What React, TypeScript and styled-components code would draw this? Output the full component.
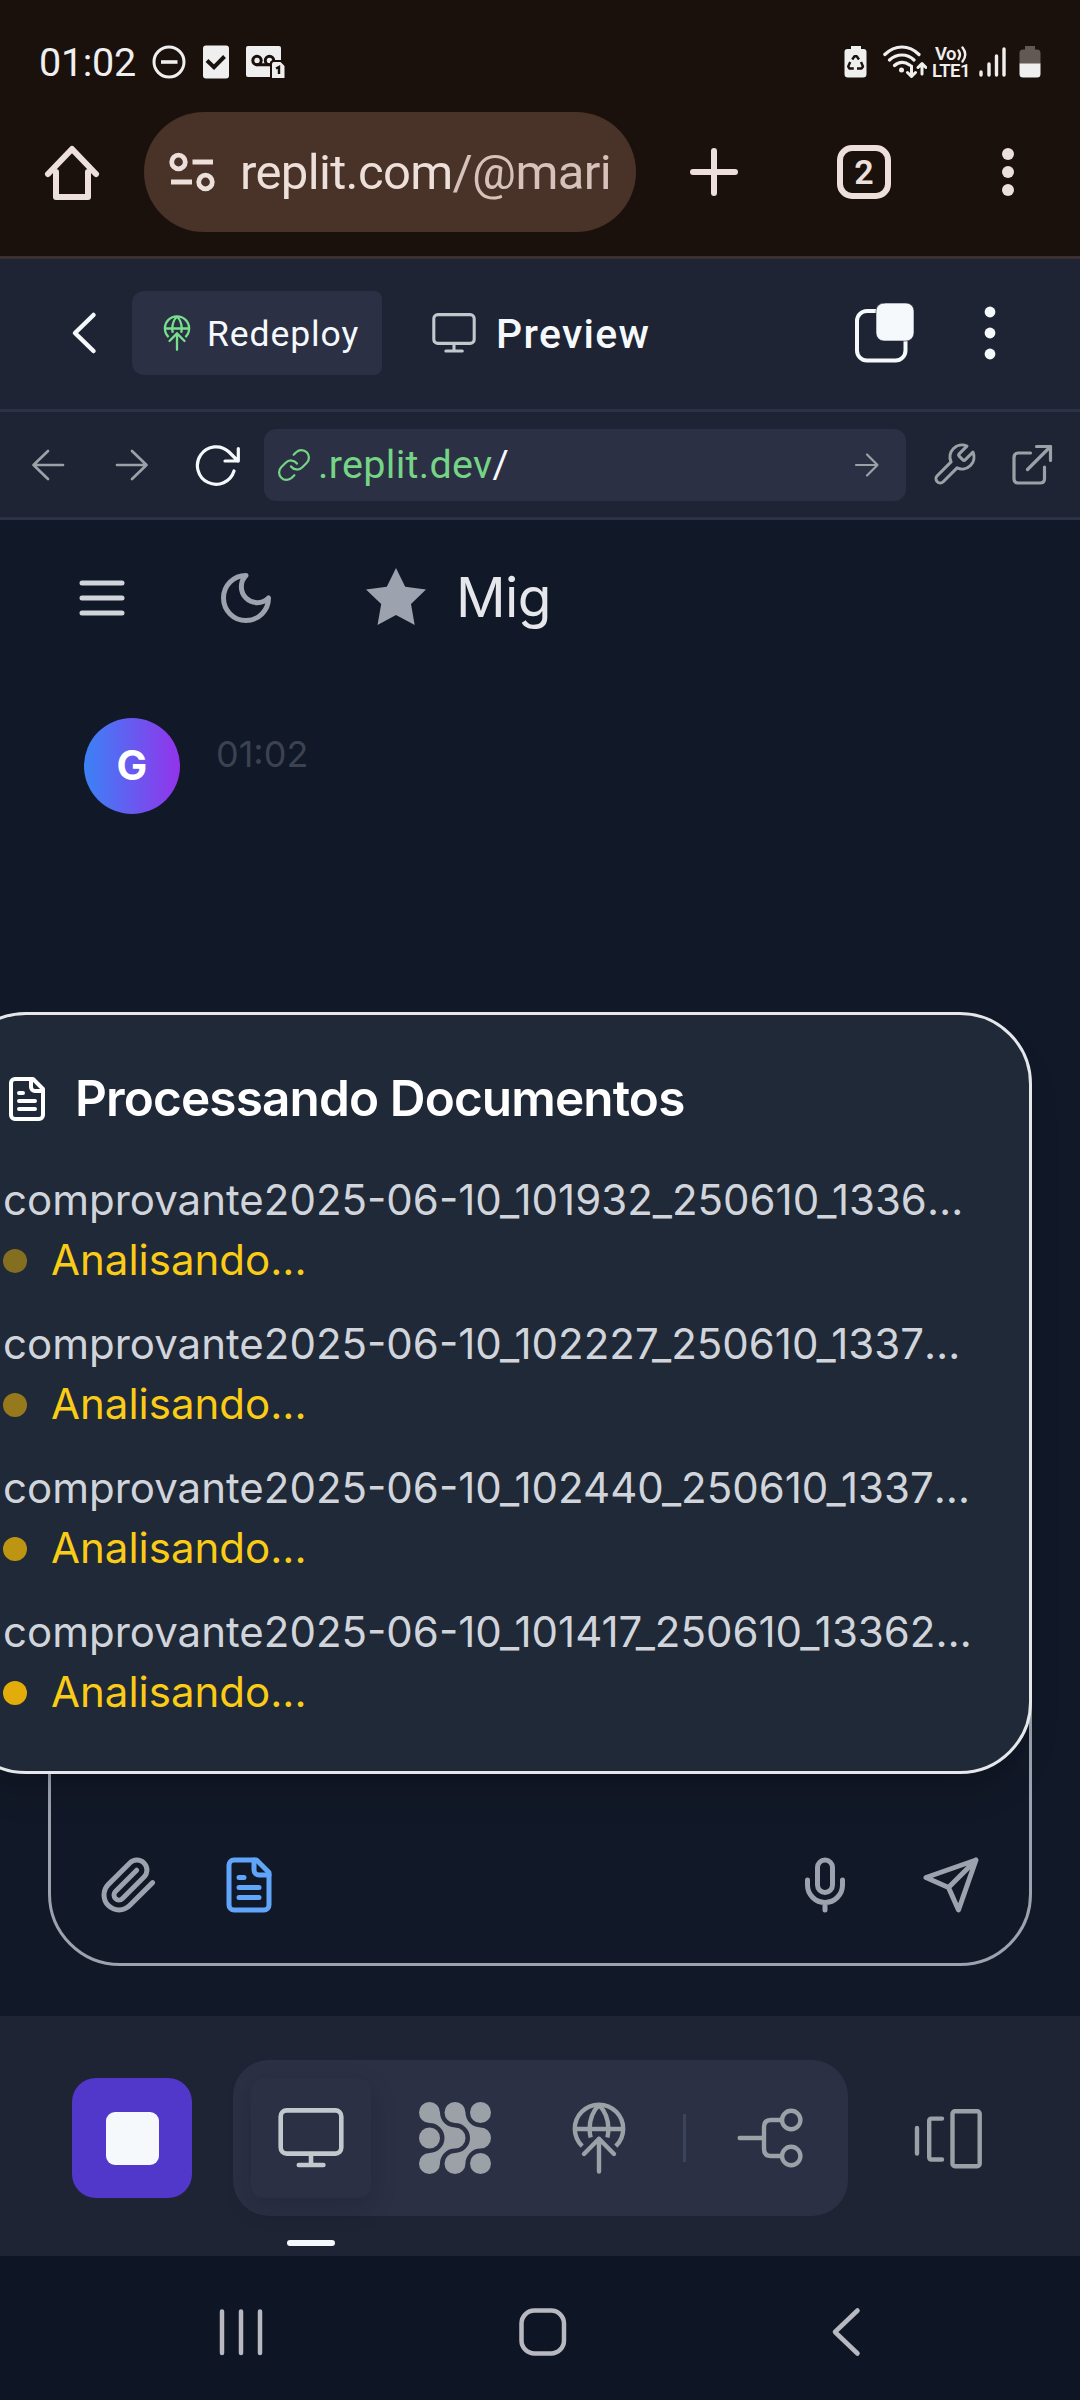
import React from "react";
import styled, { createGlobalStyle } from "styled-components";

const Global = createGlobalStyle`
  *, *::before, *::after { box-sizing: border-box; }
  html, body { margin: 0; padding: 0; background: #111827; }
  svg { display: block; flex: none; }
`;

const ui = `Roboto, "Liberation Sans", sans-serif`;
const inter = `Inter, Roboto, sans-serif`;

const Screen = styled.div`
  width: 1080px;
  height: 2400px;
  overflow: hidden;
  display: flex;
  flex-direction: column;
  font-family: ${ui};
  background: #111827;
`;

/* Status bar */
const StatusBar = styled.header`
  height: 112px;
  padding: 12px 39px 0 39px;
  display: flex;
  align-items: center;
  justify-content: space-between;
  background: #1b110c;
  color: #efefef;
`;
const StatusGroup = styled.div<{ $gap: number }>`
  display: flex;
  align-items: center;
  gap: ${(p) => p.$gap}px;
`;
const Clock = styled.span`
  font-size: 39.5px;
  line-height: 46px;
  letter-spacing: -0.3px;
  margin-top: 1px;
`;
const Carrier = styled.span`
  display: flex;
  flex-direction: column;
  align-items: center;
  width: 38px;
  margin: 1px 2px 0 -2px;
  font-size: 18.5px;
  font-weight: 600;
  line-height: 17px;
  letter-spacing: -0.6px;
`;
const CarrierTop = styled.span`
  display: flex;
  align-items: center;
  gap: 1px;
`;

/* Browser bar */
const BrowserBar = styled.nav`
  height: 147px;
  display: flex;
  align-items: flex-start;
  background: #1b110c;
  border-bottom: 3px solid #3c2f2f;
`;
const Cell = styled.div<{ $w: number; $h?: number; $color?: string }>`
  width: ${(p) => p.$w}px;
  height: ${(p) => p.$h ?? 120}px;
  display: flex;
  align-items: center;
  justify-content: center;
  flex: none;
  ${(p) => p.$color && `color: ${p.$color};`}
`;
const AddressPill = styled.div`
  width: 492px;
  height: 120px;
  border-radius: 60px;
  background: #493227;
  display: flex;
  align-items: center;
  padding-left: 24px;
  gap: 24px;
  color: #eddfda;
`;
const Address = styled.span`
  margin-top: 2px;
  font-size: 49px;
  letter-spacing: -0.65px;
  line-height: 60px;
  white-space: nowrap;
`;
const AddressPath = styled.span`
  color: #d6c2ba;
`;
const TabCount = styled.div`
  width: 54px;
  height: 54px;
  border: 6px solid #eddfda;
  border-radius: 15px;
  display: flex;
  align-items: center;
  justify-content: center;
  color: #eddfda;
  font-size: 34px;
  font-weight: 600;
  line-height: 42px;
`;

/* Editor header */
const EditorHeader = styled.div`
  height: 153px;
  padding: 0 0 2px 60px;
  display: flex;
  align-items: center;
  background: #1e2433;
  border-bottom: 3px solid #2b3245;
  color: #f5f9fc;
`;
const Redeploy = styled.button`
  margin: 0 0 0 24px;
  width: 250px;
  height: 84px;
  border: 0;
  border-radius: 12px 8px 8px 12px;
  background: #2b3044;
  display: flex;
  align-items: center;
  padding: 2px 0 0 27px;
  gap: 12px;
  color: #f5f9fc;
  font-family: ${ui};
  font-size: 35.5px;
  letter-spacing: 0.9px;
`;
const DeployIcon = styled.span`
  margin-top: -2px;
  color: #78e08c;
`;
const PaneIcon = styled.span`
  margin-left: 48px;
  color: #c2c8cc;
`;
const PaneTitle = styled.h1`
  margin: 2px auto 0 18px;
  font-size: 41px;
  font-weight: 500;
  letter-spacing: 1.3px;
  line-height: 50px;
`;

/* Preview address bar */
const PreviewBar = styled.div`
  height: 108px;
  display: flex;
  align-items: center;
  background: #1e2433;
  border-bottom: 3px solid #2b3245;
  color: #9ba1a6;
`;
const UrlField = styled.div`
  width: 642px;
  height: 72px;
  border-radius: 12px;
  background: #2b3044;
  display: flex;
  align-items: center;
  padding: 0 24px 0 12px;
  color: #f5f9fc;
  font-size: 39.5px;
  line-height: 48px;
  letter-spacing: 0.3px;
`;
const Host = styled.span`
  margin-left: 6px;
  color: #75d485;
`;
const LinkIcon = styled.span`
  color: #75d485;
`;
const GoIcon = styled.span`
  margin-left: auto;
  color: #9ba1a6;
`;

/* Embedded app */
const AppView = styled.main`
  height: 1496px;
  display: flex;
  flex-direction: column;
  background: #111827;
  font-family: ${inter};
  color: #9ca3af;
`;
const AppHeader = styled.div`
  height: 156px;
  padding-left: 72px;
  display: flex;
  align-items: center;
`;
const MenuIcon = styled.span`
  color: #d1d5db;
  margin-right: 84px;
`;
const StarIcon = styled.span`
  margin: 0 30px 0 90px;
`;
const AppName = styled.span`
  margin-top: -3px;
  font-size: 55px;
  letter-spacing: -0.6px;
  line-height: 70px;
  color: #e5e7eb;
`;
const Message = styled.div`
  display: flex;
  margin: 42px 0 0 84px;
  gap: 36px;
`;
const Avatar = styled.div`
  width: 96px;
  height: 96px;
  border-radius: 50%;
  background: linear-gradient(to right, #3b82f6, #9333ea);
  display: flex;
  align-items: center;
  justify-content: center;
  padding-bottom: 2px;
  color: #fff;
  font-size: 41px;
  font-weight: 700;
`;
const MessageTime = styled.time`
  font-size: 36px;
  line-height: 48px;
  margin-top: 12px;
  color: #3b4250;
`;
const Composer = styled.section`
  position: relative;
  margin: auto 48px 50px;
  height: 400px;
  border: 3px solid #9ca3af;
  border-radius: 72px;
  display: flex;
  align-items: flex-end;
  padding: 0 48px 48px 48px;
`;
const ToolGap = styled.span<{ $w?: number }>`
  ${(p) => (p.$w ? `width: ${p.$w}px;` : "flex: 1;")}
`;
const DocIcon = styled.span`
  color: #60a5fa;
`;
const Popup = styled.aside`
  position: absolute;
  right: -3px;
  bottom: 189px;
  width: 1078px;
  height: 762px;
  padding: 49px 45px 0;
  border: 3px solid #e5e7eb;
  border-radius: 72px;
  background: #1f2937;
  box-shadow: 0 25px 38px -8px rgba(0, 0, 0, 0.12), 0 10px 15px -10px rgba(0, 0, 0, 0.12);
`;
const PopupTitle = styled.h2`
  margin: -1px 0 37px;
  height: 70px;
  display: flex;
  align-items: center;
  gap: 24px;
  color: #fff;
  font-size: 49.5px;
  font-weight: 600;
  letter-spacing: -0.88px;
  line-height: 70px;
  white-space: nowrap;
`;
const TitleIcon = styled.span`
  margin: 1px 0 0 1px;
`;
const FileList = styled.ul`
  margin: 0;
  padding: 0;
  list-style: none;
  display: flex;
  flex-direction: column;
  gap: 24px;
  font-size: 42px;
  line-height: 60px;
`;
const FileName = styled.div`
  display: flex;
  padding-left: 1px;
  color: #d1d5db;
  white-space: nowrap;
`;
const FileStatus = styled.div`
  display: flex;
  align-items: center;
  gap: 24px;
  color: #facc15;
`;
const Pulse = styled.i<{ $o: number }>`
  width: 24px;
  height: 24px;
  margin: 2px 0 0 1px;
  border-radius: 50%;
  background: #eab308;
  opacity: ${(p) => p.$o};
`;

/* Workspace dock */
const Dock = styled.footer`
  height: 240px;
  padding: 0 72px;
  display: flex;
  align-items: flex-start;
  justify-content: space-between;
  background: #1e2433;
  color: #9ba1a6;
`;
const StopButton = styled.div`
  width: 120px;
  height: 120px;
  margin-top: 62px;
  border-radius: 24px;
  background: #5138cb;
  display: flex;
  align-items: center;
  justify-content: center;
`;
const StopGlyph = styled.div`
  width: 53px;
  height: 53px;
  border-radius: 9px;
  background: #f5f9fc;
`;
const ToolGroup = styled.div`
  height: 156px;
  margin-top: 44px;
  padding: 0 18px;
  border-radius: 36px;
  background: #2b3044;
  display: flex;
  align-items: center;
  gap: 24px;
`;
const Tool = styled.div<{ $active?: boolean; $top?: number }>`
  position: relative;
  width: 120px;
  height: 120px;
  margin-top: ${(p) => p.$top ?? 0}px;
  border-radius: 12px;
  display: flex;
  align-items: center;
  justify-content: center;
  ${(p) => p.$active && `background: #2b3044; color: #c2c8cc; box-shadow: 0 9px 24px rgba(14, 20, 34, 0.22);`}
`;
const Indicator = styled.b`
  position: absolute;
  left: 36px;
  top: 162px;
  width: 48px;
  height: 6px;
  border-radius: 3px;
  background: #f5f9fc;
`;
const Divider = styled.i`
  width: 3px;
  height: 48px;
  background: #3c445c;
`;

/* System navigation */
const SystemNav = styled.div`
  height: 144px;
  padding: 8px 205px 0 211px;
  display: flex;
  align-items: center;
  justify-content: space-between;
  background: #0e1525;
  color: #b8b8c0;
`;

type IconProps = { w: number; h?: number; vw?: number; vh?: number; sw?: number; children: React.ReactNode };
const Icon = ({ w, h = w, vw = w, vh = h, sw = 4, children }: IconProps) => (
  <svg
    width={w}
    height={h}
    viewBox={`0 0 ${vw} ${vh}`}
    fill="none"
    stroke="currentColor"
    strokeWidth={sw}
    strokeLinecap="round"
    strokeLinejoin="round"
  >
    {children}
  </svg>
);

const Globe = ({ size, sw = 4.4 }: { size: number; sw?: number }) => (
  <Icon w={size} vw={72} vh={72} sw={sw}>
    <path strokeLinecap="butt" d="M19.2 44.2A24.2 24.2 0 1 1 52.8 44.2" />
    <path d="M12.5 27H59.5" />
    <path strokeLinecap="butt" d="M36 3C30 9 26.6 18 26.6 27C26.6 30 26.9 32.5 27.6 35.4M36 3C42 9 45.4 18 45.4 27C45.4 30 45.1 32.5 44.4 35.4" />
    <path d="M36 36.8V69.5M21 52L36 36.8L51 52" />
  </Icon>
);

const Monitor = ({ size, sw = 4.6 }: { size: number; sw?: number }) => (
  <Icon w={size} vw={72} vh={72} sw={sw}>
    <rect x="5.7" y="8.4" width="60.6" height="43.2" rx="6" />
    <path d="M36 52V63M23.8 63H48.4" />
  </Icon>
);

const FileText = ({ size }: { size: number }) => (
  <Icon w={size} vw={24} vh={24} sw={2}>
    <path d="M15 2H6a2 2 0 0 0-2 2v16a2 2 0 0 0 2 2h12a2 2 0 0 0 2-2V7Z" />
    <path d="M14 2v4a2 2 0 0 0 2 2h4M10 9H8M16 13H8M16 17H8" />
  </Icon>
);

const files = [
  { name: "comprovante2025-06-10_101932_250610_1336", o: 0.5 },
  { name: "comprovante2025-06-10_102227_250610_1337", o: 0.58 },
  { name: "comprovante2025-06-10_102440_250610_1337", o: 0.78 },
  { name: "comprovante2025-06-10_101417_250610_13362", o: 0.96 },
];

export default function App() {
  return (
    <Screen>
      <Global />
      <StatusBar>
        <StatusGroup $gap={16}>
          <Clock>01:02</Clock>
          <Icon w={34} sw={3}>
            <circle cx="17" cy="17" r="15" />
            <path strokeWidth="3.6" strokeLinecap="butt" d="M9 17H25.5" />
          </Icon>
          <Icon w={28} h={34} sw={4}>
            <rect x="1" y="0.4" width="26" height="33.2" rx="3" fill="currentColor" stroke="none" />
            <path stroke="#1b110c" strokeLinecap="butt" strokeLinejoin="miter" d="M5 15.5L12 22.2L22.5 11.5" />
          </Icon>
          <Icon w={42} h={34} sw={3}>
            <path fill="currentColor" stroke="none" d="M0 3q0-2 2-2H33q2 0 2 2V15.500H27q-3 0-3 3V32H2q-2 0-2-2Z" />
            <g stroke="#1b110c">
              <circle cx="11" cy="15.500" r="4.200" />
              <circle cx="23.500" cy="15.500" r="4.200" />
              <path d="M11 19.700H23" />
            </g>
            <path fill="currentColor" stroke="#1b110c" strokeWidth="2" d="M25 19q0-3 3-3H35l4.500 4.500V34H25Z" />
            <path stroke="#1b110c" strokeWidth="2.400" strokeLinecap="butt" strokeLinejoin="miter" d="M33 29V22L30 23.500" />
          </Icon>
        </StatusGroup>
        <StatusGroup $gap={7}>
          <Icon w={32} h={34}>
            <path fill="currentColor" stroke="none" d="M7 1H17V4H19.500q3 0 3 3V29q0 3.500-3.500 3.500H4Q.5 32.500 .5 29V7q0-3 3-3H7Z" />
            <g stroke="#1b110c" strokeWidth="2.400" strokeLinecap="butt">
              <path d="M8.200 14.500L10.500 11.200H12.700L15 14.500" />
              <path d="M6.200 17L4.200 21.500L5.500 23.500H9.800" />
              <path d="M17 17L19 21.500L17.500 23.500H13" />
            </g>
          </Icon>
          <Icon w={44} h={34} sw={3.2}>
            <path d="M1.800 9.500C12 -.5 26 -.5 36 9.500M6.500 15C14 8.300 24 8.300 31 15M11.500 20.500C16 16.300 22 16.300 26.500 20" />
            <circle cx="18.500" cy="25" r="2.500" fill="currentColor" stroke="none" />
            <path strokeWidth="3" d="M28.500 21V31M24.500 27.500L28.500 31.500L32.500 27.500M39 29V19M35 22.500L39 18.500L43 22.500" />
          </Icon>
          <Carrier>
            <CarrierTop>
              Vo
              <Icon w={10} h={17} sw={2.400}>
                <path d="M1.500 4.500Q4.500 8.500 1.500 13M5.500 1.500Q11 8.500 5.500 15.500" />
              </Icon>
            </CarrierTop>
            <span>LTE1</span>
          </Carrier>
          <Icon w={33} h={34} sw={3.400}>
            <path d="M2 27V30M10 19V30M17.500 11V30M25 4V30" />
          </Icon>
          <Icon w={22} h={34}>
            <path fill="#625854" stroke="none" d="M6 1H16V4.500H18q3.500 0 3.500 3.500V19H.5V8q0-3.500 3.500-3.500H6Z" />
            <path fill="currentColor" stroke="none" d="M.5 18.500H21.500V29q0 3.500-3.500 3.500H4Q.5 32.500 .5 29Z" />
          </Icon>
        </StatusGroup>
      </StatusBar>

      <BrowserBar>
        <Cell $w={144} $color="#eddfda">
          <Icon w={56} sw={6}>
            <path d="M12 28V53H44V28M4 30L28 5L52 30" />
          </Icon>
        </Cell>
        <AddressPill>
          <Icon w={48} sw={4.800}>
            <circle cx="10.500" cy="14" r="6.800" />
            <circle cx="37.500" cy="34" r="6.800" />
            <path strokeLinecap="butt" d="M24.500 14H45M3 34H24" />
          </Icon>
          <Address>
            replit.com<AddressPath>/@mari</AddressPath>
          </Address>
        </AddressPill>
        <Cell $w={156} $color="#eddfda">
          <Icon w={54} sw={6}>
            <path d="M27 6V48M6 27H48" />
          </Icon>
        </Cell>
        <Cell $w={144}>
          <TabCount>2</TabCount>
        </Cell>
        <Cell $w={144} $color="#eddfda">
          <Icon w={12} h={48}>
            <g fill="currentColor" stroke="none">
              <circle cx="6" cy="6" r="6" />
              <circle cx="6" cy="24" r="6" />
              <circle cx="6" cy="42" r="6" />
            </g>
          </Icon>
        </Cell>
      </BrowserBar>

      <EditorHeader>
        <Icon w={48} sw={4.500}>
          <path d="M33.500 6L15 24L33.500 42" />
        </Icon>
        <Redeploy>
          <DeployIcon>
            <Globe size={36} sw={4.600} />
          </DeployIcon>
          Redeploy
        </Redeploy>
        <PaneIcon>
          <Monitor size={48} />
        </PaneIcon>
        <PaneTitle>Preview</PaneTitle>
        <Icon w={60}>
          <rect x="3" y="8" width="48.500" height="49.500" rx="10" />
          <rect x="22" y="0" width="38" height="38" rx="8" fill="#f5f9fc" stroke="#1e2433" strokeWidth="0.600" />
        </Icon>
        <Cell $w={152} $h={60}>
          <Icon w={12} h={54}>
            <g fill="currentColor" stroke="none">
              <circle cx="6" cy="6" r="5.400" />
              <circle cx="6" cy="27" r="5.400" />
              <circle cx="6" cy="48" r="5.400" />
            </g>
          </Icon>
        </Cell>
        <ToolGap $w={14} />
      </EditorHeader>

      <PreviewBar>
        <Cell $w={96} $h={72}>
          <Icon w={36} sw={2.700}>
            <path d="M33 18H3.500M18 4L3.500 18L18 32" />
          </Icon>
        </Cell>
        <Cell $w={72} $h={72}>
          <Icon w={36} sw={2.700}>
            <path d="M3 18H32.500M18 4L32.500 18L18 32" />
          </Icon>
        </Cell>
        <Cell $w={96} $h={72} $color="#f5f9fc">
          <Icon w={48} sw={3.200}>
            <path d="M42 30A18.700 18.700 0 1 1 37 11L46 20M46.300 7.500V20H33" />
          </Icon>
        </Cell>
        <UrlField>
          <LinkIcon>
            <Icon w={36} vw={24} vh={24} sw={1.500}>
              <path d="M10 13a5 5 0 0 0 7.540.54l3-3a5 5 0 0 0-7.070-7.070l-1.720 1.710" />
              <path d="M14 11a5 5 0 0 0-7.540-.54l-3 3a5 5 0 0 0 7.070 7.070l1.710-1.710" />
            </Icon>
          </LinkIcon>
          <Host>.replit.dev</Host>/
          <GoIcon>
            <Icon w={30} sw={2.200}>
              <path d="M4 15H25.500M15 4.500L25.500 15L15 25.500" />
            </Icon>
          </GoIcon>
        </UrlField>
        <Cell $w={96} $h={72}>
          <Icon w={48} vw={24} vh={24} sw={1.550}>
            <path d="M14.700 6.300a1 1 0 0 0 0 1.400l1.600 1.600a1 1 0 0 0 1.400 0l3.770-3.770a6 6 0 0 1-7.940 7.940l-6.910 6.910a2.120 2.120 0 0 1-3-3l6.910-6.910a6 6 0 0 1 7.940-7.940l-3.760 3.760z" />
          </Icon>
        </Cell>
        <Cell $w={60} $h={72}>
          <Icon w={48} sw={3.200}>
            <path d="M22.500 12H10.500Q6 12 6 16.500V38Q6 42 10.500 42H32Q36.500 42 36.500 38V26M28.500 5.500H42.500V19.500M42.500 5.500L19.500 28.500" />
          </Icon>
        </Cell>
      </PreviewBar>

      <AppView>
        <AppHeader>
          <MenuIcon>
            <Icon w={60} vw={24} vh={24} sw={2}>
              <path d="M4 6H20M4 12H20M4 18H20" />
            </Icon>
          </MenuIcon>
          <Icon w={60} vw={24} vh={24} sw={2}>
            <path d="M12 3a6 6 0 0 0 9 9 9 9 0 1 1-9-9Z" />
          </Icon>
          <StarIcon>
            <Icon w={60}>
              <path
                fill="currentColor"
                stroke="none"
                d="M30 0L39.200 18.800L60 21.500L45 36L48.700 57L30 47L11.500 57L15.200 36L0 21.500L20.800 18.800Z"
              />
            </Icon>
          </StarIcon>
          <AppName>Mig</AppName>
        </AppHeader>

        <Message>
          <Avatar>G</Avatar>
          <MessageTime>01:02</MessageTime>
        </Message>

        <Composer>
          <Icon w={60} vw={24} vh={24} sw={2}>
            <path d="m21.440 11.050-9.190 9.190a6 6 0 0 1-8.490-8.490l8.570-8.570A4 4 0 1 1 18 8.840l-8.590 8.570a2 2 0 0 1-2.830-2.830l8.490-8.480" />
          </Icon>
          <ToolGap $w={60} />
          <DocIcon>
            <FileText size={60} />
          </DocIcon>
          <ToolGap />
          <Icon w={60} vw={24} vh={24} sw={2}>
            <path d="M12 2a3 3 0 0 0-3 3v7a3 3 0 0 0 6 0V5a3 3 0 0 0-3-3ZM19 10v2a7 7 0 0 1-14 0v-2M12 19v3" />
          </Icon>
          <ToolGap $w={66} />
          <Icon w={60} vw={24} vh={24} sw={2}>
            <path d="m22 2-7 20-4-9-9-4ZM22 2 11 13" />
          </Icon>

          <Popup>
            <PopupTitle>
              <TitleIcon>
                <FileText size={48} />
              </TitleIcon>
              Processando Documentos
            </PopupTitle>
            <FileList>
              {files.map((f) => (
                <li key={f.name}>
                  <FileName>
                    {f.name}
                    <span>…</span>
                  </FileName>
                  <FileStatus>
                    <Pulse $o={f.o} />
                    Analisando...
                  </FileStatus>
                </li>
              ))}
            </FileList>
          </Popup>
        </Composer>
      </AppView>

      <Dock>
        <StopButton>
          <StopGlyph />
        </StopButton>
        <ToolGroup>
          <Tool $active>
            <Monitor size={72} />
            <Indicator />
          </Tool>
          <Tool>
            <Icon w={72}>
              <g fill="currentColor" stroke="none">
                <path d="M21 10.500A15 15 0 0 0 36 25.500A10.500 10.500 0 0 1 36 46.500A15 15 0 0 0 21 61.500A10.500 10.500 0 1 1 10.500 51A15 15 0 0 0 10.500 21A10.500 10.500 0 1 1 21 10.500Z" />
                <path d="M46.500 10.500A15 15 0 0 0 61.500 25.500A10.500 10.500 0 0 1 61.500 46.500A15 15 0 0 0 46.500 61.500A10.500 10.500 0 1 1 36 51A15 15 0 0 0 36 21A10.500 10.500 0 1 1 46.500 10.500Z" />
                <circle cx="10.500" cy="36" r="10.500" />
                <circle cx="61.500" cy="10.500" r="10.500" />
                <circle cx="61.500" cy="61.500" r="10.500" />
              </g>
            </Icon>
          </Tool>
          <Tool>
            <Globe size={72} />
          </Tool>
          <Divider />
          <Tool>
            <Icon w={72} sw={4.400}>
              <path d="M5.700 36H30M48 18H37Q30 18 30 25V47Q30 54 37 54H48" />
              <circle cx="57.200" cy="18" r="9.200" />
              <circle cx="57.200" cy="54" r="9.200" />
            </Icon>
          </Tool>
        </ToolGroup>
        <Tool $top={62}>
          <Icon w={72} sw={4.400}>
            <path d="M5 26V51.500M30 16.600H19.500Q17.200 16.600 17.200 19V55Q17.200 57.500 19.500 57.500H30" />
            <rect x="40.500" y="9.200" width="27.200" height="55" rx="2.500" />
          </Icon>
        </Tool>
      </Dock>

      <SystemNav>
        <Icon w={60} sw={4.500}>
          <path d="M11 9.500V51M30 9.500V51M49 9.500V51" />
        </Icon>
        <Icon w={60} sw={4.500}>
          <rect x="8.500" y="8.500" width="42.500" height="43" rx="13" />
        </Icon>
        <Icon w={60} sw={4.600}>
          <path d="M42.500 8.500L20 30L42.500 51.500" />
        </Icon>
      </SystemNav>
    </Screen>
  );
}
